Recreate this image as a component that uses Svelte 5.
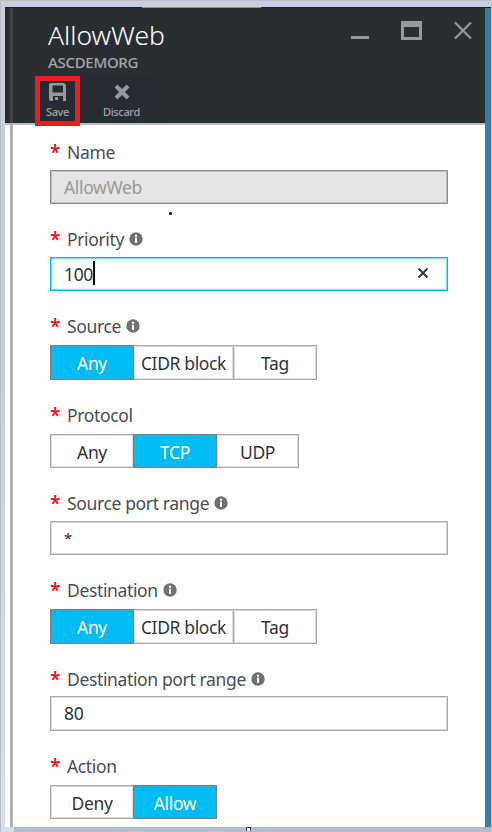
<script>
  const fields = [
    { label: 'Name', type: 'input', value: 'AllowWeb', state: 'disabled', lh: 30, h: 34 },
    { label: 'Priority', info: true, type: 'input', value: '100', state: 'focused', lh: 30, h: 34 },
    { label: 'Source', info: true, type: 'seg', options: [['Any', 84], ['CIDR block', 101], ['Tag', 84]], on: 0, lh: 31, h: 35 },
    { label: 'Protocol', type: 'seg', options: [['Any', 84], ['TCP', 84], ['UDP', 83]], on: 1, lh: 31, h: 34 },
    { label: 'Source port range', info: true, type: 'input', value: '*', state: '', lh: 30, h: 34 },
    { label: 'Destination', info: true, type: 'seg', options: [['Any', 84], ['CIDR block', 101], ['Tag', 84]], on: 0, lh: 31, h: 35 },
    { label: 'Destination port range', info: true, type: 'input', value: '80', state: '', lh: 29, h: 35 },
    { label: 'Action', type: 'seg', options: [['Deny', 84], ['Allow', 84]], on: 1, lh: 31, h: 34 }
  ];
</script>

<div class="frame">
  <div class="blade">
    <header>
      <div class="tabs"><i></i></div>
      <div class="heading">
        <div>
          <h1>AllowWeb</h1>
          <h2>ASCDEMORG</h2>
        </div>
        <svg class="controls" width="124" height="24" viewBox="0 0 124 24">
          <path d="M0 15h18v3H0z" fill="#97999c" />
          <path fill-rule="evenodd" d="M50 0h21v19H50zM53 6h15v10H53z" fill="#97999c" />
          <path d="M104 1.5l16 16M120 1.5l-16 16" stroke="#97999c" stroke-width="2.2" />
        </svg>
      </div>
      <div class="commands">
        <div class="cmd save">
          <svg width="18" height="18" viewBox="0 0 18 18">
            <path fill-rule="evenodd" d="M2 0h13l2 2v16h-3v-5H4v5H1l-1-2V1zM3.5 2.5v7h10.5v-7z" fill="#97999c" />
            <path d="M6 14h3v3H6z" fill="#97999c" />
          </svg>
          <span>Save</span>
        </div>
        <div class="cmd discard">
          <svg width="16" height="18" viewBox="0 0 16 18">
            <path d="M2 3l12 12M14 3L2 15" stroke="#97999c" stroke-width="4" />
          </svg>
          <span>Discard</span>
        </div>
      </div>
    </header>
    <main>
      {#each fields as f}
        <section>
          <div class="label" style="height:{f.lh}px">
            <b>*</b><span>{f.label}</span>
            {#if f.info}
              <svg width="14" height="14" viewBox="0 0 14 14">
                <circle cx="7" cy="7" r="6.7" fill="#6e7175" />
                <path d="M6 2.8h2v2H6zM6 5.8h2v5H6z" fill="#fff" />
              </svg>
            {/if}
          </div>
          {#if f.type === 'input'}
            <div class="input {f.state}" style="height:{f.h}px">
              <span class="value" class:star={f.value === '*'}>{f.value}</span>
              {#if f.state === 'focused'}
                <i class="caret"></i>
                <svg class="clear" width="12" height="12" viewBox="0 0 12 12">
                  <path d="M1.5 1.5l9 9M10.5 1.5l-9 9" stroke="#30343b" stroke-width="1.9" />
                </svg>
              {/if}
            </div>
          {:else}
            <div class="seg" style="height:{f.h}px">
              {#each f.options as [name, w], i}
                <div class="option" class:on={i === f.on} style="width:{w}px">{name}</div>
              {/each}
            </div>
          {/if}
        </section>
      {/each}
      <i class="dot"></i>
    </main>
  </div>
  <footer><i></i></footer>
</div>

<style>
  .frame {
    box-sizing: border-box;
    width: 492px;
    height: 832px;
    display: flex;
    flex-direction: column;
    padding: 6px 0 0 4px;
    background: linear-gradient(#c6cfe3, #c6d0e4 45%, #d5e0ee);
    border-top: 1px solid #bebebe;
    border-left: 1px solid #bdbdbd;
    border-right: 1px solid #c3c3c3;
    font-family: "Noto Sans", "Open Sans", sans-serif;
  }
  .blade {
    box-sizing: border-box;
    position: relative;
    height: 820px;
    background: #fff;
    border-right: 6px solid #357fa6;
  }
  .blade::before {
    content: "";
    position: absolute;
    left: 5px;
    top: 1px;
    width: 3px;
    height: 819px;
    background: linear-gradient(#404447 115px, #b2b2b2 115px);
  }
  header {
    box-sizing: border-box;
    height: 118px;
    background: #292e32;
    border-bottom: 2px solid #bdbdbd;
    display: flex;
    flex-direction: column;
  }
  .tabs, .heading, .commands { flex: none; }
  .tabs {
    height: 1px;
    margin-right: -6px;
    background: #1a222d;
    padding-left: 137px;
  }
  .tabs i { display: block; width: 119px; height: 1px; background: #d98219; }
  .heading { height: 68px; display: flex; justify-content: space-between; padding-left: 43px; }
  h1 { margin: 7px 0 0; color: #fff; font-size: 26.5px; font-weight: 300; line-height: 40px; }
  h2 { margin: -1px 0 0; color: #a5a7a9; font-size: 15px; font-weight: 500; line-height: 16px; letter-spacing: -0.3px; }
  .controls { margin: 13px 10px 0 0; }
  .commands { position: relative; display: flex; padding-left: 30px; }
  .cmd {
    box-sizing: border-box;
    display: flex;
    flex-direction: column;
    align-items: center;
    height: 50px;
    color: #a0a2a5;
    font-size: 11px;
    line-height: 14px;
    letter-spacing: -0.35px;
    font-weight: 500;
  }
  .cmd span { margin-top: 4px; }
  .save { width: 45px; border: 5px solid #ed1c24; padding-top: 2px; background: #272b34; }
  .discard { width: 65px; height: 43px; margin-left: 9px; padding-top: 7px; background: #272b34; }
  main { display: flex; flex-direction: column; gap: 23px; padding: 15px 0 0 45px; color: #4b4e52; font-size: 17.5px; letter-spacing: -0.36px; }
  .label { display: flex; line-height: 25px; }
  .label b { width: 17px; color: #e81123; font-size: 19px; font-weight: 600; line-height: 25px; letter-spacing: 0; }
  .label svg { margin: 5px 0 0 5px; }
  .input {
    box-sizing: border-box;
    width: 398px;
    display: flex;
    align-items: center;
    padding-left: 13px;
    border: 1px solid #aaa;
    box-shadow: inset 0 0 0 1px #d9d9d9;
    color: #30343b;
  }
  .disabled { border-color: #8e8e8e; background: #e5e5e5; box-shadow: inset 0 0 0 1px #bdbdbd; color: #999; }
  .focused { border-color: #00b9f1; box-shadow: inset 0 0 0 1px #7fdcf8; }
  .value { line-height: 24px; padding-bottom: 1px; }
  .star { font-size: 15px; }
  .caret { width: 2px; height: 24px; background: #000; margin-top: -2px; }
  .clear { margin: -3px 18px 0 auto; }
  .seg { display: flex; color: #30343b; }
  .option {
    box-sizing: border-box;
    display: flex;
    align-items: center;
    justify-content: center;
    padding-top: 1px;
    border: 1px solid #aaa;
    box-shadow: inset 0 0 0 1px #dcdcdc;
    white-space: nowrap;
  }
  .option + .option { margin-left: -1px; }
  .on { position: relative; background: #00bcf2; border-color: #7a8184; box-shadow: inset 0 0 0 1px #2fa9cd; color: #fff; }
  .dot { position: absolute; left: 164px; top: 205px; width: 3px; height: 3px; background: radial-gradient(#000 35%, #777); border-radius: 1px; }
  footer { height: 5px; margin-left: 9px; background: linear-gradient(#a9b7d0, #b8c2d4 80%, #bdbdbd 80%); padding-left: 232px; }
  footer i { display: block; box-sizing: border-box; width: 5px; height: 4px; border: 1px solid #444; border-bottom: 0; background: #fff; }
</style>
